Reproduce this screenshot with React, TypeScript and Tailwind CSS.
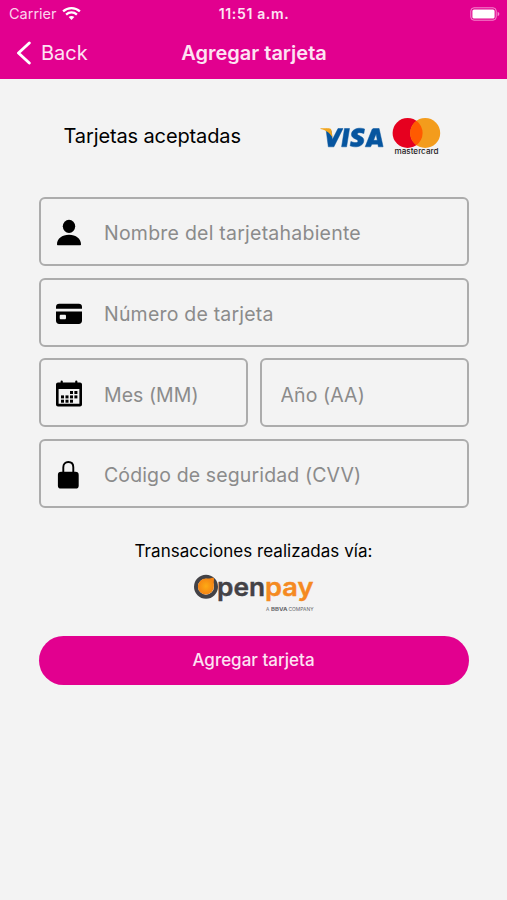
import type { ReactNode } from "react";

function WifiIcon() {
  return (
    <svg className="w-[19px] h-[15px]" viewBox="0 0 19 15" fill="none" stroke="white" strokeWidth={2.3}>
      <path d="M1.1 5.4C5.8 1 13.2 1 17.9 5.4" />
      <path d="M4.1 8.6c3.1-2.9 7.7-2.9 10.8 0" />
      <path d="M6.7 11.1c1.6-1.5 4-1.5 5.6 0L9.5 14z" fill="white" stroke="none" />
    </svg>
  );
}

function BatteryIcon() {
  return (
    <svg className="w-[31px] h-[14px]" viewBox="0 0 31 14">
      <rect x="0.8" y="0.8" width="25.4" height="12.4" rx="3.2" fill="none" stroke="#f58bcf" strokeWidth={1} />
      <rect x="2.4" y="2.4" width="22.2" height="9.2" rx="1.6" fill="white" />
      <path d="M27.6 4.8c2.3.8 2.3 3.6 0 4.4z" fill="#f58bcf" />
    </svg>
  );
}

function PersonIcon() {
  return (
    <svg className="w-7 h-7" viewBox="0 0 28 28" fill="black">
      <ellipse cx="14" cy="7.3" rx="6.2" ry="6.6" />
      <path d="M2 25.2C2 19.6 7 15.7 14 15.7s12 3.9 12 9.5c0 .7-.4 1-1.1 1H3.1c-.7 0-1.1-.3-1.1-1z" />
    </svg>
  );
}

function CardIcon() {
  return (
    <svg className="w-7 h-7" viewBox="0 0 28 28" fill="black">
      <path d="M1 8.7V6.8c0-2 1.3-3.1 3.2-3.1h19.6c1.9 0 3.2 1.1 3.2 3.1v1.9z" />
      <path
        fillRule="evenodd"
        d="M1 11.4h26v9.4c0 2-1.3 3.2-3.2 3.2H4.2C2.3 24 1 22.8 1 20.8zM6 14.7c-.8 0-1.3.5-1.3 1.3v1.9c0 .8.5 1.3 1.3 1.3h3.7c.8 0 1.3-.5 1.3-1.3V16c0-.8-.5-1.3-1.3-1.3z"
      />
    </svg>
  );
}

function CalendarIcon() {
  return (
    <svg className="w-7 h-7" viewBox="0 0 28 28">
      <path d="M6.7 1.5v4M21.3 1.5v4" stroke="black" strokeWidth={2.2} strokeLinecap="round" />
      <path
        fillRule="evenodd"
        d="M3 2.6h22c1.1 0 2 .9 2 2v20c0 1.1-.9 2-2 2H3c-1.1 0-2-.9-2-2v-20c0-1.1.9-2 2-2zM3.6 9v14.8h20.8V9z"
      />
      <g fill="black">
        <rect x="15" y="11" width="3" height="3" />
        <rect x="19.4" y="11" width="3" height="3" />
        <rect x="6" y="15.4" width="3" height="3" />
        <rect x="10.5" y="15.4" width="3" height="3" />
        <rect x="15" y="15.4" width="3" height="3" />
        <rect x="19.4" y="15.4" width="3" height="3" />
        <rect x="6" y="19.7" width="3" height="3" />
        <rect x="10.5" y="19.7" width="3" height="3" />
        <rect x="15" y="19.7" width="3" height="3" />
      </g>
    </svg>
  );
}

function LockIcon() {
  return (
    <svg className="w-7 h-7" viewBox="0 0 28 28">
      <rect x="2.9" y="10.7" width="20.8" height="16.9" rx="3.2" fill="black" />
      <path d="M8.3 13V6.2C8.3 3 10.4 1 13.3 1s5 2 5 5.2V13" fill="none" stroke="black" strokeWidth={1.9} />
    </svg>
  );
}

function VisaLogo() {
  return (
    <svg className="w-[64px] h-[24px]" viewBox="0 0 64 24">
      <g fill="#06559f" stroke="#06559f" strokeWidth={0.5}>
        <path d="M6 3 8.3 20.8h5.600L23 2.500h-5l-5.600 11L11.100 4.700z" />
        <path d="M24.500 2.500h5l-2.900 18.300h-5z" />
        <path d="M44.600 3c-4.900-1.800-12.600-.8-13.200 5.200 0 5 6.800 4.600 6.600 7-.3 2-4.300 1.600-7.100.2l-.8 4.400c5.500 2.300 13.200.9 13.700-5 .3-5-6.800-4.800-6.500-7 .2-1.600 4-1.400 6.500-.2z" />
        <path
          fillRule="evenodd"
          d="M53.800 2.500h5.300l4 18.300h-4.700l-.5-2.600h-6l-1.300 2.600h-5.400l6.500-16.500c.4-1.200 1-1.800 2.100-1.800zM56.100 7.900l-2.500 6.400h3.700z"
        />
      </g>
      <path d="M.5 2.300h8.200c1.700 0 2.500.8 2.800 2.400L12.600 12C10.700 7.800 6.600 4.400.5 3.100z" fill="#f2a51c" />
    </svg>
  );
}

function MastercardLogo() {
  return (
    <svg className="w-[50px] h-[42px]" viewBox="0 0 50 42">
      <circle cx="16.6" cy="16" r="15" fill="#e6001f" />
      <circle cx="34.2" cy="16" r="15" fill="#f39c1c" />
      <path d="M25.4 3.85a15 15 0 0 1 0 24.3a15 15 0 0 1 0-24.3z" fill="#ff5a00" />
      <text
        x="3.5"
        y="37"
        textLength="44"
        lengthAdjust="spacingAndGlyphs"
        fontSize="7.6"
        fontWeight="500"
        fontFamily="Inter, sans-serif"
        fill="#1d1a1c"
      >
        mastercard
      </text>
    </svg>
  );
}

function OpenpayLogo() {
  return (
    <svg className="w-[124px] h-[42px] overflow-visible" viewBox="0 0 124 42">
      <defs>
        <radialGradient id="drop">
          <stop offset="0" stopColor="#fdab14" />
          <stop offset="1" stopColor="#f58413" />
        </radialGradient>
      </defs>
      <circle cx="14" cy="13.7" r="10" fill="none" stroke="#434246" strokeWidth={4} />
      <path d="M20.400 4.700c1.200-.1 1.700.4 1.600 1.600-.4 2.500-.1 4.500-.1 7A8 8 0 1 1 13.900 5.600c2.500 0 4-.2 6.500-.9z" fill="url(#drop)" />
      <g fontFamily="Inter, sans-serif" fontSize="25.5" fontWeight="600" strokeWidth={0.4}>
        <text x="25" y="22.800" textLength="48" lengthAdjust="spacingAndGlyphs" fill="#434246" stroke="#434246">
          pen
        </text>
        <text x="73" y="22.800" textLength="48.500" lengthAdjust="spacingAndGlyphs" fill="#f58a22" stroke="#f58a22">
          pay
        </text>
      </g>
      <g fontFamily="Inter, sans-serif" fontSize="4.8" fill="#66666a">
        <text x="74" y="37.8">A</text>
        <text x="79" y="37.8" fontWeight="700" textLength="16.5" lengthAdjust="spacingAndGlyphs">
          BBVA
        </text>
        <text x="96.5" y="37.8" textLength="25" lengthAdjust="spacingAndGlyphs">
          COMPANY
        </text>
      </g>
    </svg>
  );
}

function Field({ icon, placeholder, spacing }: { icon?: ReactNode; placeholder: string; spacing: string }) {
  return (
    <label className="flex flex-1 min-w-0 h-[69px] items-center rounded-[6px] border-2 border-[#acacac] pt-[3px]">
      {icon && <span className="ml-[14.5px] mr-[2px] shrink-0">{icon}</span>}
      <input
        className={`ml-[19px] w-full min-w-0 bg-transparent pt-[2px] text-[19.5px] outline-none placeholder:text-[#8b8b8b] placeholder:opacity-100 ${spacing}`}
        placeholder={placeholder}
      />
    </label>
  );
}

export default function App() {
  return (
    <div className="min-h-[900px] bg-[#f3f3f3] font-[Inter,sans-serif] text-black">
      {/* Header */}
      <header className="h-[79px] bg-[#e2008f] text-white">
        <div className="grid h-[27px] grid-cols-3 items-center pl-[9px] pr-[6px]">
          <div className="flex items-center gap-[5px] text-[14.5px] text-[#fbd3ec]">
            <span>Carrier</span>
            <WifiIcon />
          </div>
          <span className="-ml-[2px] text-center text-[14px] font-semibold tracking-[0.65px] text-[#fde3f3]">11:51 a.m.</span>
          <div className="flex justify-end">
            <BatteryIcon />
          </div>
        </div>
        <div className="grid h-[52px] grid-cols-[1fr_auto_1fr] items-center pl-4 pr-4">
          <button className="flex items-center gap-[9px] text-[20px] text-[#fde3f3]">
            <svg className="w-4 h-6" viewBox="0 0 16 24" fill="none" stroke="white" strokeWidth={2.9} strokeLinecap="round" strokeLinejoin="round">
              <path d="M13.3 2 2.5 12l10.8 10" />
            </svg>
            Back
          </button>
          <h1 className="ml-px text-[20px] font-semibold text-[#fde3f3]">Agregar tarjeta</h1>
        </div>
      </header>

      <main className="px-[38.5px]">
        {/* Accepted cards */}
        <div className="flex h-[118px] items-center pl-[25px]">
          <h2 className="w-[256px] pb-[5px] text-[20px] tracking-[-0.12px]">Tarjetas aceptadas</h2>
          <div className="flex items-center gap-[7px]">
            <VisaLogo />
            <MastercardLogo />
          </div>
        </div>

        {/* Card form */}
        <form className="flex flex-col gap-[11.67px]">
          <div className="flex">
            <Field icon={<PersonIcon />} placeholder="Nombre del tarjetahabiente" spacing="tracking-[0.23px]" />
          </div>
          <div className="flex">
            <Field icon={<CardIcon />} placeholder="Número de tarjeta" spacing="tracking-[0.2px]" />
          </div>
          <div className="flex gap-3">
            <Field icon={<CalendarIcon />} placeholder="Mes (MM)" spacing="tracking-[0.05px]" />
            <Field placeholder="Año (AA)" spacing="tracking-[0.1px]" />
          </div>
          <div className="flex">
            <Field icon={<LockIcon />} placeholder="Código de seguridad (CVV)" spacing="tracking-[0.13px]" />
          </div>
        </form>

        {/* Payment provider */}
        <div className="flex flex-col items-center pt-[30px]">
          <p className="text-[17px] leading-[26px] tracking-[0.04px]">Transacciones realizadas vía:</p>
          <div className="mt-[9px]">
            <OpenpayLogo />
          </div>
        </div>

        <button className="mt-[21px] h-[49px] w-full rounded-full bg-[#e2008f] pt-px text-[17px] font-medium text-[#fde3f3]">
          Agregar tarjeta
        </button>
      </main>
    </div>
  );
}
